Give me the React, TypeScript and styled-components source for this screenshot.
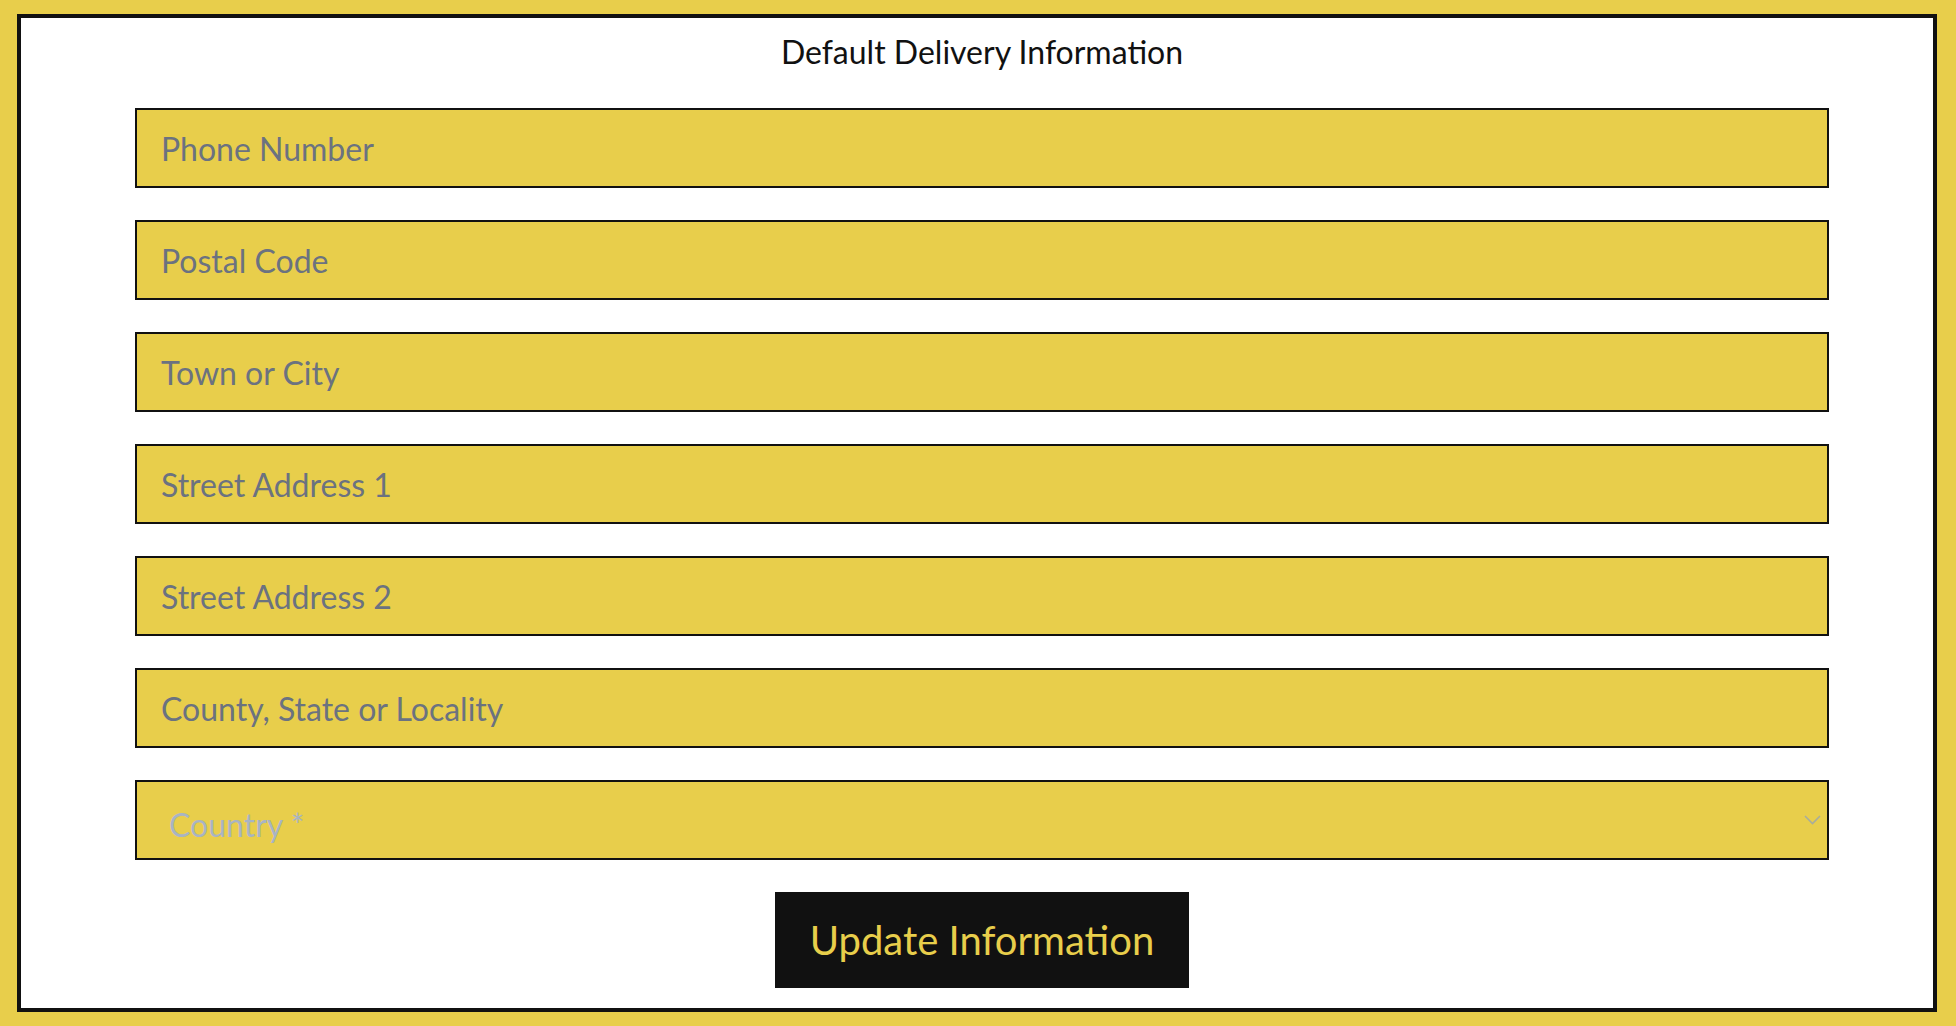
import React from 'react';
import styled, { createGlobalStyle } from 'styled-components';

const YELLOW = '#e8ce4b';
const INK = '#111111';

const GlobalStyle = createGlobalStyle`
  html, body {
    margin: 0;
    padding: 0;
    background: ${YELLOW};
  }
  * {
    box-sizing: border-box;
  }
`;

const Page = styled.div`
  display: flex;
  min-height: 1026px;
  padding: 14px 19px 14px 17px;
  background: ${YELLOW};
  font-family: Lato, 'Liberation Sans', sans-serif;
`;

const Card = styled.form`
  flex: 1;
  display: flex;
  flex-direction: column;
  border: 4px solid ${INK};
  background: #fff;
  padding: 15px 104px 20px 114px;
`;

const Title = styled.h2`
  margin: 0 0 37px;
  font-size: 32px;
  line-height: 38px;
  font-weight: 400;
  color: ${INK};
  text-align: center;
`;

const Fields = styled.div`
  display: flex;
  flex-direction: column;
  gap: 32px;
`;

const Field = styled.input`
  height: 80px;
  width: 100%;
  border: 2px solid ${INK};
  border-radius: 0;
  background: ${YELLOW};
  padding: 0 24px;
  font-family: Lato, 'Liberation Sans', sans-serif;
  font-size: 32px;
  color: ${INK};
  outline: none;

  &::placeholder {
    color: #6b7280;
    opacity: 1;
  }
`;

const SelectWrap = styled.div`
  position: relative;
  height: 80px;
`;

const Select = styled.select`
  appearance: none;
  -webkit-appearance: none;
  width: 100%;
  height: 100%;
  border: 2px solid ${INK};
  border-radius: 0;
  background: ${YELLOW};
  padding: 8px 60px 0 32px;
  font-family: Lato, 'Liberation Sans', sans-serif;
  font-size: 32px;
  color: #a9b4c3;
  outline: none;
`;

const Chevron = styled.svg`
  position: absolute;
  right: 8px;
  top: 35px;
  width: 17px;
  height: 10px;
  pointer-events: none;
`;

const Submit = styled.button`
  align-self: center;
  margin-top: 32px;
  width: 414px;
  height: 96px;
  border: none;
  background: ${INK};
  color: ${YELLOW};
  font-family: Lato, 'Liberation Sans', sans-serif;
  font-size: 40px;
  cursor: pointer;
`;

const fields = [
  'Phone Number',
  'Postal Code',
  'Town or City',
  'Street Address 1',
  'Street Address 2',
  'County, State or Locality',
];

export default function App() {
  return (
    <>
      <GlobalStyle />
      <Page>
        <Card onSubmit={(e) => e.preventDefault()}>
          <Title>Default Delivery Information</Title>
          <Fields>
            {fields.map((f) => (
              <Field key={f} placeholder={f} />
            ))}
            <SelectWrap>
              <Select defaultValue="">
                <option value="" disabled>
                  Country *
                </option>
              </Select>
              <Chevron viewBox="0 0 17 10">
                <path
                  d="M1 1l7.5 7.5L16 1"
                  fill="none"
                  stroke="#a8ad9c"
                  strokeWidth="1.6"
                />
              </Chevron>
            </SelectWrap>
          </Fields>
          <Submit type="submit">Update Information</Submit>
        </Card>
      </Page>
    </>
  );
}
